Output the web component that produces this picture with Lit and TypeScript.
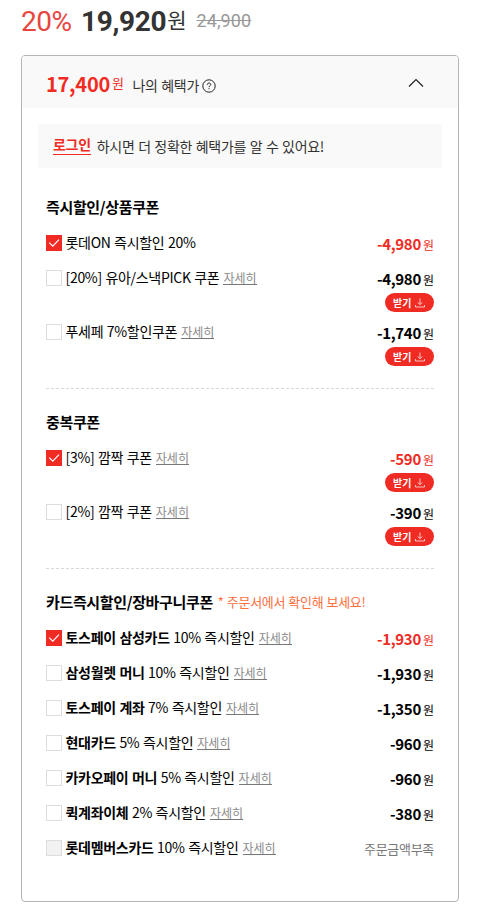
import { LitElement, html, css, svg, nothing } from "lit";
import { customElement, property } from "lit/decorators.js";
import { classMap } from "lit/directives/class-map.js";

interface Coupon {
  brand?: string;
  label: string;
  detail?: boolean;
  amount?: string;
  note?: string;
  checked?: boolean;
  disabled?: boolean;
  download?: boolean;
}

interface Group {
  title: string;
  hint?: string;
  items: Coupon[];
}

const groups: Group[] = [
  {
    title: "즉시할인/상품쿠폰",
    items: [
      { label: "롯데ON 즉시할인 20%", amount: "-4,980", checked: true },
      { label: "[20%] 유아/스낵PICK 쿠폰", detail: true, amount: "-4,980", download: true },
      { label: "푸세페 7%할인쿠폰", detail: true, amount: "-1,740", download: true },
    ],
  },
  {
    title: "중복쿠폰",
    items: [
      { label: "[3%] 깜짝 쿠폰", detail: true, amount: "-590", checked: true, download: true },
      { label: "[2%] 깜짝 쿠폰", detail: true, amount: "-390", download: true },
    ],
  },
  {
    title: "카드즉시할인/장바구니쿠폰",
    hint: "* 주문서에서 확인해 보세요!",
    items: [
      { brand: "토스페이 삼성카드", label: "10% 즉시할인", detail: true, amount: "-1,930", checked: true },
      { brand: "삼성월렛 머니", label: "10% 즉시할인", detail: true, amount: "-1,930" },
      { brand: "토스페이 계좌", label: "7% 즉시할인", detail: true, amount: "-1,350" },
      { brand: "현대카드", label: "5% 즉시할인", detail: true, amount: "-960" },
      { brand: "카카오페이 머니", label: "5% 즉시할인", detail: true, amount: "-960" },
      { brand: "퀵계좌이체", label: "2% 즉시할인", detail: true, amount: "-380" },
      { brand: "롯데멤버스카드", label: "10% 즉시할인", detail: true, note: "주문금액부족", disabled: true },
    ],
  },
];

const checkMark = svg`<path d="M3.2 7.6 L6.8 11.2 L13 4.6" fill="none" stroke="#fff" stroke-width="1.2"/>`;

@customElement("coupon-row")
export class CouponRow extends LitElement {
  @property({ attribute: false }) coupon!: Coupon;

  static styles = css`
    :host { display: block; }
    .row { display: flex; justify-content: space-between; height: 35px; letter-spacing: -0.3px; }
    .row.tall { height: 54px; }
    .left { display: flex; height: 20px; align-items: center; }
    .box { box-sizing: border-box; width: 16px; height: 16px; border: 1px solid #ddd; background: #fff; margin-right: 3.5px; }
    .box.on { border: 0; background: #f02b24; }
    .box.off { background: #f2f2f2; }
    .box svg { display: block; }
    .label { font-size: 14px; line-height: 18px; height: 20px; color: #000; white-space: pre; word-spacing: 0.7px; }
    .brand { font-weight: 700; }
    .detail { font-size: 12px; line-height: 14px; color: #888; border-bottom: 1px solid #777; margin-left: 4px; letter-spacing: 0; height: 13px; display: flex; align-items: center; }
    .right { display: flex; flex-direction: column; align-items: flex-end; }
    .price { height: 25px; line-height: 21px; display: flex; align-items: baseline; color: #000; font-size: 15px; font-weight: 700; letter-spacing: -0.3px; }
    .price.red { color: #f02b24; }
    .won { font-size: 12px; font-weight: 400; margin-left: 2px; letter-spacing: 0; }
    .note { font-size: 13px; line-height: 21px; color: #777; }
    .get { box-sizing: border-box; height: 19px; width: 49px; border-radius: 10px; background: #f02b24; color: #fff; display: flex; align-items: center; padding-left: 8px; font-size: 10px; line-height: 19px; font-weight: 700; letter-spacing: 0; gap: 3.5px; }
  `;

  render() {
    const c = this.coupon;
    return html`
      <div class=${classMap({ row: true, tall: !!c.download })}>
        <div class="left">
          <span class=${classMap({ box: true, on: !!c.checked, off: !!c.disabled })}>
            ${c.checked ? html`<svg width="16" height="16" viewBox="0 0 16 16">${checkMark}</svg>` : nothing}
          </span>
          <span class="label">${c.brand ? html`<span class="brand">${c.brand}</span> ` : nothing}${c.label}</span>
          ${c.detail ? html`<span class="detail">자세히</span>` : nothing}
        </div>
        <div class="right">
          ${c.amount
            ? html`<div class=${classMap({ price: true, red: !!c.checked })}>${c.amount}<span class="won">원</span></div>`
            : html`<div class="note">${c.note}</div>`}
          ${c.download
            ? html`<div class="get">받기<svg width="10" height="10" viewBox="0 0 10 10" fill="none" stroke="#fff" stroke-opacity=".85" stroke-width=".85">
                <path d="M5 .5V6.5M2.7 4.4L5 6.7L7.3 4.4M.5 7V9H9.5V7" /></svg></div>`
            : nothing}
        </div>
      </div>
    `;
  }
}

@customElement("app-root")
export class AppRoot extends LitElement {
  static styles = css`
    :host { display: block; box-sizing: border-box; height: 909px; overflow: hidden; background: #fff; padding: 0 45px 0 21px; font-family: "Noto Sans CJK KR", "Noto Sans", sans-serif; }
    .summary { display: flex; align-items: center; height: 42px; margin-bottom: 13px; font-family: Roboto, "Noto Sans CJK KR", sans-serif; white-space: nowrap; line-height: 42px; }
    .rate { font-size: 28px; font-weight: 400; color: #e8453f; width: 60px; letter-spacing: -0.5px; padding-top: 1px; }
    .sale { font-size: 28px; font-weight: 700; color: #333; letter-spacing: -0.35px; padding-top: 1px; }
    .sale-won { font-size: 21px; color: #333; margin-left: 1px; }
    .list { font-size: 18px; color: #999; text-decoration: line-through; margin-left: 10px; letter-spacing: 0.1px; }
    .card { box-sizing: border-box; width: 438px; height: 847px; border: 1px solid #b5b5b5; border-radius: 4px; overflow: hidden; }
    .head { box-sizing: border-box; height: 52px; background: #f9f9f9; display: flex; align-items: center; padding: 6px 34px 0 24px; line-height: 30px; }
    .total { font-size: 20px; font-weight: 700; color: #f02b24; letter-spacing: -0.25px; margin-top: -2px; }
    .total-won { font-size: 13px; color: #f02b24; margin: -4px 0 0 2px; }
    .mine { font-size: 14px; color: #333; margin-left: 8.5px; letter-spacing: -0.3px; word-spacing: 0.8px; }
    .help { margin: 1px 0 0 2.5px; }
    .chevron { margin: -5px 0 0 auto; }
    .login { box-sizing: border-box; height: 44px; margin: 16px 16px 0; background: #f9f9f9; padding-left: 15px; display: flex; align-items: center; font-size: 14px; line-height: 20px; color: #333; letter-spacing: -0.3px; word-spacing: 0.8px; }
    .link { box-sizing: border-box; height: 19px; line-height: 17px; font-weight: 700; color: #f02b24; border-bottom: 1px solid #f02b24; margin: -1px 6px 0 0; }
    .groups { padding: 6px 24px 0; }
    .group { padding-top: 24px; }
    .group:not(:last-child) { border-bottom: 1px dashed #d8d8d8; padding-bottom: 12px; }
    .title { display: flex; align-items: center; height: 18px; line-height: 18px; font-size: 15px; font-weight: 700; color: #000; letter-spacing: -0.35px; margin-bottom: 17px; }
    .hint { font-size: 13px; font-weight: 400; color: #ff6e3c; margin-left: 5px; letter-spacing: -0.3px; word-spacing: 0.6px; }
  `;

  render() {
    return html`
      <div class="summary">
        <span class="rate">20%</span>
        <span class="sale">19,920</span><span class="sale-won">원</span>
        <span class="list">24,900</span>
      </div>
      <div class="card">
        <div class="head">
          <span class="total">17,400</span><span class="total-won">원</span>
          <span class="mine">나의 혜택가</span>
          <svg class="help" width="14" height="14" viewBox="0 0 14 14" fill="none" stroke="#222">
            <circle cx="7" cy="7" r="6.2" />
            <path d="M5.2 5.8C5.2 3.5 8.8 3.5 8.8 5.6C8.8 6.8 7 6.7 7 8.2M7 9.2V10.3" />
          </svg>
          <svg class="chevron" width="16" height="10" viewBox="0 0 16 10" fill="none" stroke="#222" stroke-width="1.2">
            <path d="M1 8.5L8 1.5L15 8.5" />
          </svg>
        </div>
        <div class="login"><span class="link">로그인</span><span>하시면 더 정확한 혜택가를 알 수 있어요!</span></div>
        <div class="groups">
          ${groups.map(
            (g) => html`
              <div class="group">
                <div class="title"><span>${g.title}</span>${g.hint ? html`<span class="hint">${g.hint}</span>` : nothing}</div>
                ${g.items.map((c) => html`<coupon-row .coupon=${c}></coupon-row>`)}
              </div>
            `,
          )}
        </div>
      </div>
    `;
  }
}
